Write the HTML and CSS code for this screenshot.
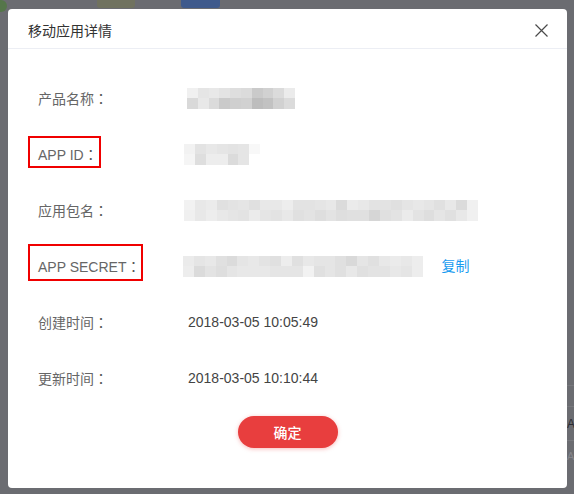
FILE: index.html
```html
<!DOCTYPE html>
<html lang="zh-CN">
<head>
<meta charset="utf-8">
<title>移动应用详情</title>
<link rel="stylesheet" href="styles.css">
</head>
<body>
<div class="backdrop" aria-hidden="true">
  <span class="bg-dot"></span>
  <span class="bg-tag bg-tag-olive"></span>
  <span class="bg-tag bg-tag-blue"></span>
  <span class="bg-line bg-line-1"></span>
  <span class="bg-line bg-line-2"></span>
  <span class="bg-line bg-line-3"></span>
  <span class="bg-letter bg-letter-1">A</span>
  <span class="bg-letter bg-letter-2">A</span>
</div>

<div class="dialog">
  <div class="dialog-header">
    <span class="dialog-title">移动应用详情</span>
    <svg class="close" width="13" height="13" viewBox="0 0 13 13" aria-label="关闭">
      <path d="M0.5 0.5 L12.5 12.5 M12.5 0.5 L0.5 12.5" stroke="#4a4a4a" stroke-width="1.2" fill="none"/>
    </svg>
  </div>

  <div class="dialog-body">
    <div class="row">
      <div class="label-col"><span class="label">产品名称<span class="colon" lang="zh-TW">：</span></span></div>
      <div class="mosaic mosaic-name">
        <span class="s94"></span><span class="s85"></span>
        <span class="s90"></span><span class="s91"></span>
        <span class="s91"></span><span class="s86"></span>
        <span class="s89"></span><span class="s79"></span>
        <span class="s87"></span><span class="s81"></span>
        <span class="s86"></span><span class="s82"></span>
        <span class="s79"></span><span class="s74"></span>
        <span class="s82"></span><span class="s76"></span>
        <span class="s86"></span><span class="s82"></span>
        <span class="s92"></span><span class="s86"></span>
      </div>
    </div>

    <div class="row">
      <div class="label-col"><span class="label marked marked-id">APP ID<span class="colon" lang="zh-TW">：</span></span></div>
      <div class="mosaic">
        <span class="s95"></span><span class="s96"></span>
        <span class="s89"></span><span class="s87"></span>
        <span class="s91"></span><span class="s93"></span>
        <span class="s90"></span><span class="s93"></span>
        <span class="s89"></span><span class="s86"></span>
        <span class="s90"></span><span class="s90"></span>
        <span class="s97"></span><span class="s100"></span>
      </div>
    </div>

    <div class="row">
      <div class="label-col"><span class="label">应用包名<span class="colon" lang="zh-TW">：</span></span></div>
      <div class="mosaic">
        <span class="s95"></span><span class="s94"></span>
        <span class="s91"></span><span class="s91"></span>
        <span class="s92"></span><span class="s93"></span>
        <span class="s88"></span><span class="s91"></span>
        <span class="s89"></span><span class="s90"></span>
        <span class="s90"></span><span class="s89"></span>
        <span class="s88"></span><span class="s92"></span>
        <span class="s91"></span><span class="s90"></span>
        <span class="s91"></span><span class="s89"></span>
        <span class="s93"></span><span class="s91"></span>
        <span class="s89"></span><span class="s88"></span>
        <span class="s89"></span><span class="s89"></span>
        <span class="s90"></span><span class="s87"></span>
        <span class="s91"></span><span class="s89"></span>
        <span class="s86"></span><span class="s87"></span>
        <span class="s92"></span><span class="s88"></span>
        <span class="s91"></span><span class="s88"></span>
        <span class="s89"></span><span class="s84"></span>
        <span class="s89"></span><span class="s88"></span>
        <span class="s88"></span><span class="s89"></span>
        <span class="s90"></span><span class="s92"></span>
        <span class="s91"></span><span class="s89"></span>
        <span class="s90"></span><span class="s87"></span>
        <span class="s88"></span><span class="s90"></span>
        <span class="s91"></span><span class="s88"></span>
        <span class="s86"></span><span class="s91"></span>
        <span class="s94"></span><span class="s94"></span>
      </div>
    </div>

    <div class="row">
      <div class="label-col"><span class="label marked marked-secret">APP SECRET<span class="colon" lang="zh-TW">：</span></span></div>
      <div class="mosaic mosaic-secret">
        <span class="s92"></span><span class="s93"></span>
        <span class="s90"></span><span class="s86"></span>
        <span class="s91"></span><span class="s89"></span>
        <span class="s88"></span><span class="s87"></span>
        <span class="s86"></span><span class="s90"></span>
        <span class="s90"></span><span class="s91"></span>
        <span class="s91"></span><span class="s91"></span>
        <span class="s89"></span><span class="s91"></span>
        <span class="s88"></span><span class="s90"></span>
        <span class="s93"></span><span class="s90"></span>
        <span class="s88"></span><span class="s90"></span>
        <span class="s91"></span><span class="s95"></span>
        <span class="s90"></span><span class="s88"></span>
        <span class="s90"></span><span class="s90"></span>
        <span class="s88"></span><span class="s88"></span>
        <span class="s85"></span><span class="s91"></span>
        <span class="s90"></span><span class="s88"></span>
        <span class="s88"></span><span class="s89"></span>
        <span class="s91"></span><span class="s89"></span>
        <span class="s92"></span><span class="s91"></span>
        <span class="s91"></span><span class="s90"></span>
        <span class="s93"></span><span class="s93"></span>
      </div>
      <a class="copy" href="#">复制</a>
    </div>

    <div class="row">
      <div class="label-col"><span class="label">创建时间<span class="colon" lang="zh-TW">：</span></span></div>
      <span class="value">2018-03-05 10:05:49</span>
    </div>

    <div class="row">
      <div class="label-col"><span class="label">更新时间<span class="colon" lang="zh-TW">：</span></span></div>
      <span class="value">2018-03-05 10:10:44</span>
    </div>
  </div>

  <div class="dialog-footer">
    <button class="btn-primary" type="button">确定</button>
  </div>
</div>
</body>
</html>
```

FILE: styles.css
```css
* { box-sizing: border-box; }

html, body {
  margin: 0;
  height: 100%;
}

body {
  background: #6b6c71;
  padding: 9px 0 0 8px;
  font-family: "Liberation Sans", Arial, "Noto Sans CJK SC", sans-serif;
  font-size: 14px;
  color: #333;
  overflow: hidden;
  position: relative;
}

/* dimmed page behind the overlay */
.backdrop {
  position: absolute;
  inset: 0;
  z-index: 0;
}
.bg-dot {
  position: absolute;
  left: -5px;
  top: 0;
  width: 12px;
  height: 12px;
  border-radius: 50%;
  background: #55764a;
}
.bg-tag {
  position: absolute;
  top: -4px;
  height: 12px;
  border-radius: 3px;
}
.bg-tag-olive { left: 97px; width: 38px; background: #70725f; }
.bg-tag-blue { left: 181px; width: 39px; background: #3f5a8c; }
.bg-line {
  position: absolute;
  left: 560px;
  width: 14px;
  height: 1px;
  background: #77787d;
}
.bg-line-1 { top: 385px; }
.bg-line-2 { top: 406px; }
.bg-line-3 { top: 440px; }
.bg-letter {
  position: absolute;
  left: 567px;
  font-size: 12px;
  line-height: 14px;
}
.bg-letter-1 { top: 417px; color: #2c2d33; }
.bg-letter-2 { top: 449px; color: #85868c; font-size: 11px; }

.dialog {
  position: relative;
  z-index: 1;
  width: 559px;
  height: 479px;
  background: #fff;
  border-radius: 4px;
  display: flex;
  flex-direction: column;
}

.dialog-header {
  display: flex;
  align-items: center;
  justify-content: space-between;
  height: 40px;
  padding: 11px 19px 8px 20px;
  border-bottom: 1px solid #eceef4;
}
.dialog-title {
  font-family: "Noto Sans CJK SC", sans-serif;
  font-size: 14px;
  line-height: 20px;
  color: #333;
}
.close {
  display: block;
  flex: none;
}

.dialog-body {
  padding: 21px 0 0 30px;
}

.row {
  display: flex;
  align-items: center;
  height: 56px;
}

.label-col {
  width: 150px;
  flex: none;
}
.label {
  display: inline-block;
  line-height: 20px;
  color: #666;
}
.colon {
  font-family: "Noto Sans CJK TC", "Noto Sans CJK JP", sans-serif;
  color: #555;
}
.marked {
  position: relative;
}
.marked::after {
  content: "";
  position: absolute;
  border: 2px solid #f00000;
  pointer-events: none;
}
.marked-id::after { top: -8px; bottom: -3px; left: -10px; right: -3px; }
.marked-secret::after { top: -12px; bottom: -4px; left: -10px; right: -3px; }

.value {
  line-height: 20px;
  color: #444;
}

.mosaic {
  display: grid;
  grid-auto-flow: column;
  grid-template-rows: 10px 11px;
  grid-auto-columns: 10.9px;
  margin-left: -4px;
}
.mosaic-name { margin-left: -1px; grid-auto-columns: 10.8px; }
.mosaic-secret { margin-left: -5px; }

.s74 { background: #bdbdbd; }
.s76 { background: #c2c2c2; }
.s79 { background: #cacaca; }
.s81 { background: #cfcfcf; }
.s82 { background: #d1d1d1; }
.s84 { background: #d6d6d6; }
.s85 { background: #d9d9d9; }
.s86 { background: #dbdbdb; }
.s87 { background: #dedede; }
.s88 { background: #e0e0e0; }
.s89 { background: #e3e3e3; }
.s90 { background: #e5e5e5; }
.s91 { background: #e8e8e8; }
.s92 { background: #ebebeb; }
.s93 { background: #ededed; }
.s94 { background: #f0f0f0; }
.s95 { background: #f2f2f2; }
.s96 { background: #f5f5f5; }
.s97 { background: #f8f8f8; }
.s100 { background: #ffffff; }

.copy {
  margin-left: 19px;
  margin-top: -3px;
  font-family: "Noto Sans CJK SC", sans-serif;
  line-height: 20px;
  color: #1a9cf0;
  text-decoration: none;
}

.dialog-footer {
  display: flex;
  justify-content: center;
  padding-top: 10px;
}
.btn-primary {
  width: 100px;
  height: 32px;
  border: none;
  border-radius: 16px;
  background: #e83e3e;
  color: #fff;
  font-family: "Noto Sans CJK SC", sans-serif;
  font-size: 14px;
  font-weight: 500;
  box-shadow: 0 1px 4px rgba(232, 62, 62, 0.35);
  padding: 0;
  cursor: pointer;
}
```
